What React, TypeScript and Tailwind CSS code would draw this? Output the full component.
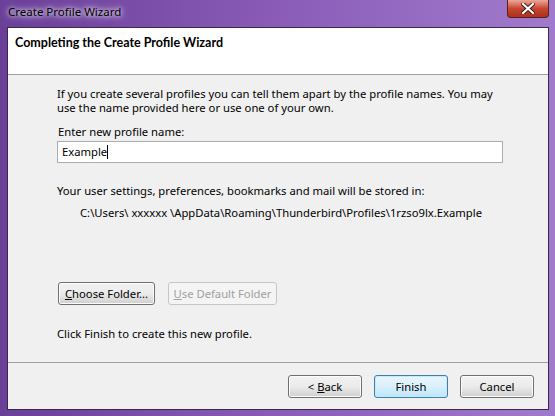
import React from "react";

const font = { fontFamily: '"Noto Sans", "Open Sans", sans-serif' };

const Btn = ({
  children,
  className = "",
  disabled = false,
  primary = false,
}: {
  children: React.ReactNode;
  className?: string;
  disabled?: boolean;
  primary?: boolean;
}) => (
  <button
    className={`h-[23px] rounded-[3px] border text-[11.25px] leading-none ${
      disabled
        ? "border-[#c6c6c6] bg-[#f4f4f4] text-[#a0a0a0]"
        : primary
        ? "border-[#3c7fb1] bg-gradient-to-b from-[#eaf6fd] via-[#d9f0fc] to-[#bee6fd] text-black shadow-[inset_0_0_0_1px_#c6e9fb]"
        : "border-[#707070] bg-gradient-to-b from-[#f2f2f2] via-[#ebebeb] to-[#cfcfcf] text-black shadow-[inset_0_0_0_1px_#fcfcfc]"
    } ${className}`}
  >
    {children}
  </button>
);

export default function App() {
  return (
    <div
      className="relative w-[555px] h-[416px] overflow-hidden bg-gradient-to-r from-[#6a3f98] via-[#8a5cb8] to-[#a07acc]"
      style={font}
    >
      {/* title bar */}
      <div className="h-[27px] flex items-center pl-[8px] pb-[3px]">
        <span className="text-[11.5px] text-black [text-shadow:0_0_8px_#ffffff,0_0_4px_#ffffff]">
          Create Profile Wizard
        </span>
      </div>
      <div className="absolute right-[6px] top-0 w-[42px] h-[18px] rounded-b-[4px] border border-[#5a1f1f] border-t-0 bg-gradient-to-b from-[#e9a898] via-[#c8452f] to-[#b0301c] flex items-center justify-center">
        <svg width="14" height="11" viewBox="0 0 14 11">
          <path d="M2 1 L12 10 M12 1 L2 10" stroke="#3a1a1a" strokeWidth="4" strokeLinecap="square" />
          <path d="M2 1 L12 10 M12 1 L2 10" stroke="#ffffff" strokeWidth="2.2" strokeLinecap="square" />
        </svg>
      </div>

      {/* client area */}
      <div className="ml-[7px] w-[542px] h-[383px] border border-[#3a2a4a] bg-[#f0f0f0] flex flex-col">
        <div className="h-[47px] bg-white border-b border-[#a0a0a0] pl-[7px] pt-[6px]">
          <div className="text-[12.5px] font-bold text-black" style={{ fontFamily: 'Lato, "Noto Sans", sans-serif' }}>
            Completing the Create Profile Wizard
          </div>
        </div>

        <div className="flex-1 pl-[49px] pt-[12px] text-[11.25px] text-black leading-[14px]">
          <p className="whitespace-nowrap">
            If you create several profiles you can tell them apart by the profile names. You may
            <br />
            use the name provided here or use one of your own.
          </p>
          <p className="mt-[10px] ml-[1px]">Enter new profile name:</p>
          <div className="mt-[2px] w-[446px] h-[22px] bg-white border border-[#abadb3] flex items-center pl-[4px]">
            <span>Example</span>
            <span className="inline-block w-[1px] h-[14px] bg-black" />
          </div>
          <p className="mt-[21px]">Your user settings, preferences, bookmarks and mail will be stored in:</p>
          <p className="mt-[8px] ml-[23px] whitespace-nowrap">
            C:\Users\ xxxxxx \AppData\Roaming\Thunderbird\Profiles\1rzso9lx.Example
          </p>
          <div className="mt-[62px] flex gap-[13px] ml-[1px]">
            <Btn className="w-[97px]">
              <span className="underline">C</span>hoose Folder...
            </Btn>
            <Btn className="w-[109px]" disabled>
              <span className="underline">U</span>se Default Folder
            </Btn>
          </div>
          <p className="mt-[22px]">Click Finish to create this new profile.</p>
        </div>

        <div className="h-[47px] border-t border-[#a0a0a0] flex items-start justify-end gap-[12px] pr-[14px] pt-[12px]">
          <Btn className="w-[74px]">
            &lt; <span className="underline">B</span>ack
          </Btn>
          <Btn className="w-[74px]" primary>
            Finish
          </Btn>
          <Btn className="w-[74px]">Cancel</Btn>
        </div>
      </div>
    </div>
  );
}
